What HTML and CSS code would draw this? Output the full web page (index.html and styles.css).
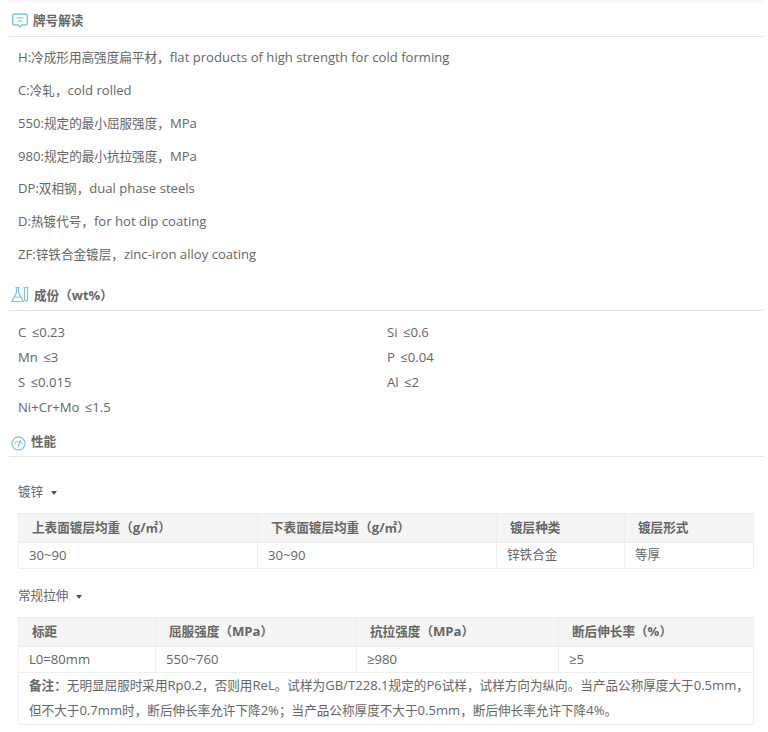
FILE: index.html
```html
<!DOCTYPE html>
<html lang="zh">
<head>
<meta charset="utf-8">
<title>牌号解读</title>
<link rel="stylesheet" href="styles.css">
</head>
<body>
<main class="page">
  <div class="topbar"></div>
  <h2 class="heading h-first">
    <svg class="icon icon-chat" viewBox="0 0 16 15" fill="none"><path d="M2.500 1h11a1.800 1.800 0 0 1 1.800 1.800v7.400a1.800 1.800 0 0 1-1.800 1.800h-3.500l-2 2-2-2h-3.500a1.800 1.800 0 0 1-1.800-1.800v-7.400a1.800 1.800 0 0 1 1.800-1.800z" stroke="#7cc0ee" stroke-width="1.400"/><path d="M4.500 5h7M5.500 8h5" stroke="#7cc0ee" stroke-width="1.100"/></svg>
    <span class="zh">牌号解读</span>
  </h2>
  <section class="decode">
    <p>H:<span class="zh">冷成形用高强度扁平材，</span>flat products of high strength for cold forming</p>
    <p>C:<span class="zh">冷轧，</span>cold rolled</p>
    <p>550:<span class="zh">规定的最小屈服强度，</span>MPa</p>
    <p>980:<span class="zh">规定的最小抗拉强度，</span>MPa</p>
    <p>DP:<span class="zh">双相钢，</span>dual phase steels</p>
    <p>D:<span class="zh">热镀代号，</span>for hot dip coating</p>
    <p>ZF:<span class="zh">锌铁合金镀层，</span>zinc-iron alloy coating</p>
  </section>
  <h2 class="heading h-comp">
    <svg class="icon icon-flask" viewBox="0 0 18 17" fill="none" stroke="#7cc0ee"><path d="M4.500 1.500h4M5.500 1.500v5L1 15.500h11.500L7.500 6.500v-5" stroke-width="1.200"/><path d="M3.500 11h6.500" stroke-width="1"/><path d="M12.500 1.500h5M13.500 1.500v12a1.500 1.500 0 0 0 1.500 1.500h.5a1.500 1.500 0 0 0 1-1.500v-12" stroke-width="1.100"/></svg>
    <span><span class="zh">成份（</span>wt%<span class="zh">）</span></span>
  </h2>
  <section class="comp">
    <div>C ≤0.23</div><div>Si ≤0.6</div>
    <div>Mn ≤3</div><div>P ≤0.04</div>
    <div>S ≤0.015</div><div>Al ≤2</div>
    <div>Ni+Cr+Mo ≤1.5</div>
  </section>
  <h2 class="heading h-perf">
    <svg class="icon icon-gauge" viewBox="0 0 16 16" fill="none" stroke="#7cc0ee"><circle cx="8" cy="8" r="7" stroke-width="1.300"/><path d="M3.800 9a4.300 4.300 0 0 1 8.400 0" stroke-width=".9"/><path d="M10 4.500L7.500 12" stroke-width="1.300"/></svg>
    <span class="zh">性能</span>
  </h2>
  <div class="label l-first"><span class="zh">镀锌</span><i class="caret"></i></div>
  <table class="t1">
    <colgroup><col class="a1"><col class="a2"><col class="a3"><col></colgroup>
    <thead><tr><th><span class="zh">上表面镀层均重（</span>g/<span class="zh">㎡）</span></th><th><span class="zh">下表面镀层均重（</span>g/<span class="zh">㎡）</span></th><th class="zh">镀层种类</th><th class="zh">镀层形式</th></tr></thead>
    <tbody><tr><td>30~90</td><td>30~90</td><td class="zh">锌铁合金</td><td class="zh">等厚</td></tr></tbody>
  </table>
  <div class="label l-second"><span class="zh">常规拉伸</span><i class="caret"></i></div>
  <table class="t2">
    <colgroup><col class="b1"><col class="b2"><col class="b3"><col></colgroup>
    <thead><tr><th class="zh">标距</th><th><span class="zh">屈服强度（</span>MPa<span class="zh">）</span></th><th><span class="zh">抗拉强度（</span>MPa<span class="zh">）</span></th><th><span class="zh">断后伸长率（</span>%<span class="zh">）</span></th></tr></thead>
    <tbody>
      <tr><td>L0=80mm</td><td>550~760</td><td>≥980</td><td>≥5</td></tr>
      <tr><td colspan="4" class="note"><b class="zh">备注：</b><span class="zh">无明显屈服时采用</span>Rp0.2<span class="zh">，否则用</span>ReL<span class="zh">。试样为</span>GB/T228.1<span class="zh">规定的</span>P6<span class="zh">试样，试样方向为纵向。当产品公称厚度大于</span>0.5mm<span class="zh">，</span><br><span class="zh">但不大于</span>0.7mm<span class="zh">时，断后伸长率允许下降</span>2%<span class="zh">；当产品公称厚度不大于</span>0.5mm<span class="zh">，断后伸长率允许下降</span>4%<span class="zh">。</span></td></tr>
    </tbody>
  </table>
</main>
</body>
</html>
```
FILE: styles.css
```css
* { box-sizing: border-box; }
html, body { margin: 0; padding: 0; background: #fff; }
body {
  font-family: "Open Sans", "Noto Sans CJK SC", sans-serif;
  font-size: 13.120px;
  color: #666;
  height: 732px;
  overflow: hidden;
}
.zh { font-size: 12.600px; }
.page { width: 755px; margin-left: 9px; }
.topbar { height: 2px; background: #f7f7f7; }
.heading {
  display: flex;
  align-items: center;
  margin: 0;
  height: 35px;
  padding-left: 3px;
  font-size: 13px;
  font-weight: 700;
  color: #666;
  border-bottom: 1px solid #e3e3e3;
  gap: 5px;
}
.icon { flex: none; }
.icon-chat { width: 16px; height: 15px; margin-top: 2px; }
.decode { padding: 4.200px 0 0 9px; }
.decode p { margin: 0; height: 32.800px; line-height: 32.800px; }
.h-comp { margin-top: 7.800px; height: 32px; padding-left: 2px; }
.icon-flask { width: 18px; height: 17px; }
.comp {
  display: grid;
  grid-template-columns: 369px 1fr;
  grid-auto-rows: 25px;
  padding: 9px 0 0 9px;
  line-height: 25px;
  word-spacing: 2px;
}
.h-perf { height: 37px; padding: 6px 0 0 2px; }
.icon-gauge { width: 15px; height: 15px; margin-top: 5px; }
.label { padding-left: 9px; line-height: 20px; }
.l-first { margin-top: 24px; }
.l-second { margin-top: 16px; }
.caret {
  display: inline-block;
  width: 0;
  height: 0;
  margin-left: 8px;
  border: 3px solid transparent;
  border-top: 4px solid #555;
  border-bottom: 0;
  vertical-align: 1px;
}
table {
  width: 736px;
  margin-left: 9px;
  border-collapse: collapse;
  table-layout: fixed;
}
.t1, .t2 { margin-top: 11px; }
th, td { border: 1px solid #eee; text-align: left; font-size: 13.120px; color: #666; line-height: 18px; }
th { height: 29px; padding: 0 0 0 13px; background: #f5f5f5; font-weight: 700; }
td { height: 26px; padding: 0 0 0 10px; }
th.zh, td.zh { font-size: 12.600px; }
.a1, .a2 { width: 239px; }
.a3 { width: 128px; }
.b1 { width: 137px; }
.b2 { width: 201px; }
.b3 { width: 202px; }
td.note { line-height: 24.500px; padding: 0 10px; height: 51px; white-space: nowrap; }
```
